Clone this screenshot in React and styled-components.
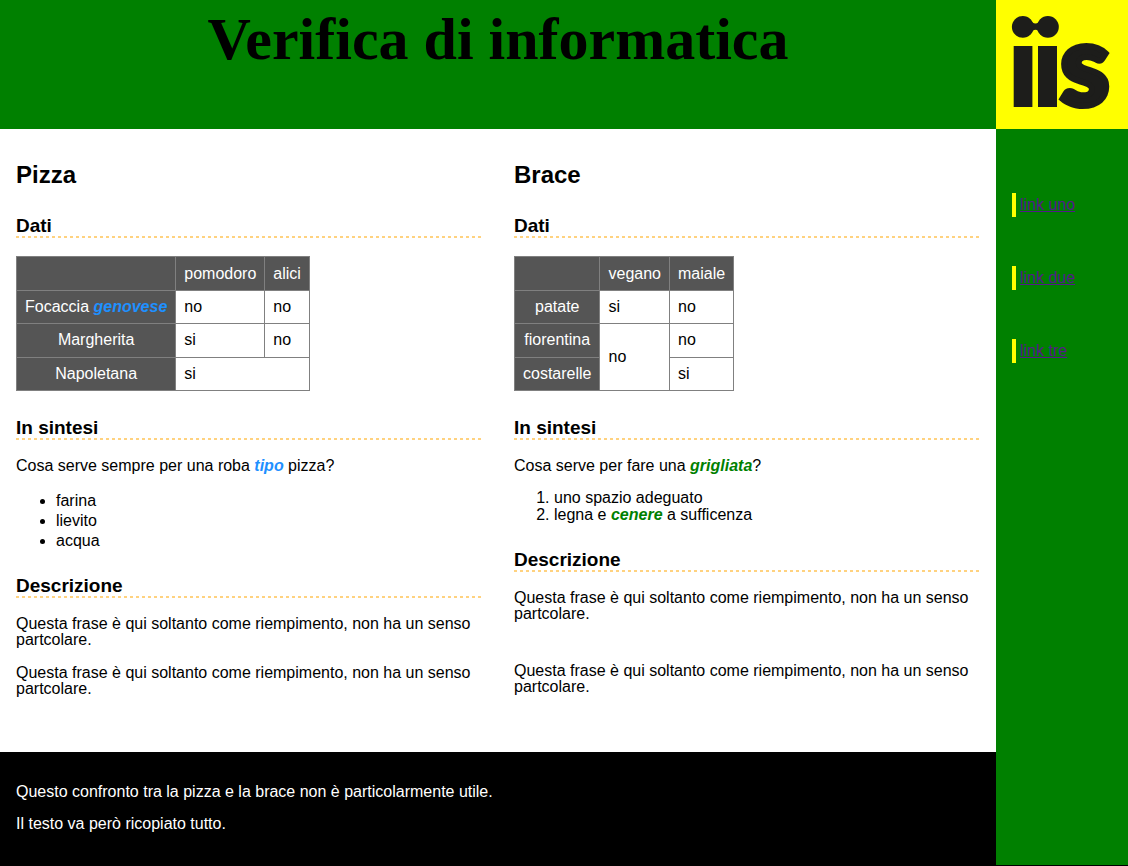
import React from "react";
import styled, { createGlobalStyle } from "styled-components";

const GlobalStyle = createGlobalStyle`
  *, *::before, *::after { box-sizing: border-box; }
  body {
    margin: 0;
    background: #fff;
    color: #000;
    font: 16px/16px "Liberation Sans", Helvetica, Arial, sans-serif;
  }
`;

const Page = styled.div`
  display: grid;
  grid-template-columns: minmax(0, 1fr) 132px;
  grid-template-rows: auto 1fr;
  min-height: 100vh;
  border-bottom: 1px solid #000;
`;

const Header = styled.header`
  background: green;
  text-align: center;
`;

const Title = styled.h1`
  margin: 0;
  padding: 4px 16px;
  font: bold 60px/70px "Liberation Serif", "Times New Roman", serif;
`;

const LogoBox = styled.div`
  background: yellow;
  svg { display: block; width: 100%; }
`;

const Content = styled.div`
  display: flex;
  flex-direction: column;
`;

const Main = styled.main`
  display: grid;
  grid-template-columns: repeat(2, minmax(0, 1fr));
  padding-bottom: 38px;
`;

const Column = styled.section`
  padding: 34px 16px 0;
`;

const Heading = styled.h2`
  margin: 0 0 29px;
  font-size: 24px;
  line-height: 24px;
`;

const SubHeading = styled.h3`
  margin: 0 0 18px;
  padding-bottom: 3px;
  font-size: 19px;
  line-height: 19px;
  background: repeating-linear-gradient(90deg, #ffd27f 0 3px, transparent 3px 6px)
    left bottom / 100% 2px no-repeat;
`;

const Text = styled.p`
  margin: 0 0 ${(p) => p.$gap ?? 17}px;
`;

const Term = styled.em`
  color: ${(p) => p.$color};
  font-weight: bold;
`;

const Table = styled.table`
  height: 135px;
  margin-bottom: 27px;
  border-collapse: collapse;
  thead tr { height: 34px; }
  th, td {
    padding: 8px;
    border: 1px solid gray;
    font-weight: normal;
  }
  th { background: #555; color: #fff; text-align: center; }
  td { text-align: left; }
`;

const BulletList = styled.ul`
  margin: 0 0 25px;
  padding-left: 40px;
  line-height: 20px;
`;

const NumberList = styled.ol`
  margin: 0 0 27px;
  padding-left: 40px;
  line-height: 17px;
`;

const Footer = styled.footer`
  flex: 1;
  padding: 32px 16px;
  background: #000;
  color: #fff;
`;

const FooterText = styled.p`
  margin: 0 0 16px;
  &:last-child { margin: 0; }
`;

const Nav = styled.nav`
  display: flex;
  flex-direction: column;
  gap: 49px;
  padding: 64px 16px;
  background: green;
`;

const NavItem = styled.div`
  border-left: 4px solid yellow;
  padding-left: 4px;
  line-height: 24px;
`;

const NavLink = styled.a`
  color: #551a8b;
`;

const filler = "Questa frase è qui soltanto come riempimento, non ha un senso partcolare.";

function Logo() {
  return (
    <svg viewBox="0 0 132 129" fill="#1d1d1b" role="img" aria-label="iis">
      <circle cx="26.8" cy="26.9" r="10.9" />
      <circle cx="51.9" cy="26.9" r="10.9" />
      <path d="M34 19 C37 25 42 25 45 19 V35 C42 28 37 28 34 35 Z" />
      <rect x="17.7" y="46" width="18.7" height="61" />
      <rect x="42" y="46" width="19" height="61" />
      <text
        x="64"
        y="105"
        fontFamily="Lato, sans-serif"
        fontWeight="900"
        fontSize="112"
        stroke="#1d1d1b"
        strokeWidth="6"
      >
        s
      </text>
    </svg>
  );
}

export default function App() {
  return (
    <>
      <GlobalStyle />
      <Page>
        <Header>
          <Title>Verifica di informatica</Title>
        </Header>
        <LogoBox><Logo /></LogoBox>
        <Content>
          <Main>
            <Column>
              <Heading>Pizza</Heading>
              <SubHeading>Dati</SubHeading>
              <Table>
                <thead>
                  <tr><th /><th scope="col">pomodoro</th><th scope="col">alici</th></tr>
                </thead>
                <tbody>
                  <tr>
                    <th scope="row">Focaccia <Term $color="dodgerblue">genovese</Term></th>
                    <td>no</td><td>no</td>
                  </tr>
                  <tr><th scope="row">Margherita</th><td>si</td><td>no</td></tr>
                  <tr><th scope="row">Napoletana</th><td colSpan={2}>si</td></tr>
                </tbody>
              </Table>
              <SubHeading>In sintesi</SubHeading>
              <Text>Cosa serve sempre per una roba <Term $color="dodgerblue">tipo</Term> pizza?</Text>
              <BulletList>
                <li>farina</li>
                <li>lievito</li>
                <li>acqua</li>
              </BulletList>
              <SubHeading>Descrizione</SubHeading>
              <Text>{filler}</Text>
              <Text>{filler}</Text>
            </Column>
            <Column>
              <Heading>Brace</Heading>
              <SubHeading>Dati</SubHeading>
              <Table>
                <thead>
                  <tr><th /><th scope="col">vegano</th><th scope="col">maiale</th></tr>
                </thead>
                <tbody>
                  <tr><th scope="row">patate</th><td>si</td><td>no</td></tr>
                  <tr><th scope="row">fiorentina</th><td rowSpan={2}>no</td><td>no</td></tr>
                  <tr><th scope="row">costarelle</th><td>si</td></tr>
                </tbody>
              </Table>
              <SubHeading>In sintesi</SubHeading>
              <Text $gap={15}>Cosa serve per fare una <Term $color="green">grigliata</Term>?</Text>
              <NumberList>
                <li>uno spazio adeguato</li>
                <li>legna e <Term $color="green">cenere</Term> a sufficenza</li>
              </NumberList>
              <SubHeading>Descrizione</SubHeading>
              <Text $gap={41}>{filler}</Text>
              <Text>{filler}</Text>
            </Column>
          </Main>
          <Footer>
            <FooterText>Questo confronto tra la pizza e la brace non è particolarmente utile.</FooterText>
            <FooterText>Il testo va però ricopiato tutto.</FooterText>
          </Footer>
        </Content>
        <Nav aria-label="Link">
          <NavItem><NavLink href="#uno">link uno</NavLink></NavItem>
          <NavItem><NavLink href="#due">link due</NavLink></NavItem>
          <NavItem><NavLink href="#tre">link tre</NavLink></NavItem>
        </Nav>
      </Page>
    </>
  );
}
